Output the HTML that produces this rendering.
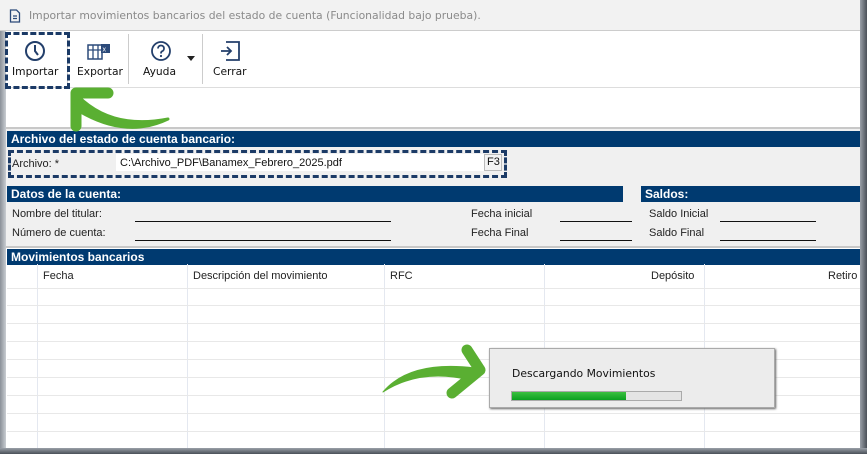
<!DOCTYPE html>
<html><head><meta charset="utf-8"><style>
*{margin:0;padding:0;box-sizing:border-box}
body{width:867px;height:454px;overflow:hidden;background:#fff;font-family:"Liberation Sans",sans-serif;font-size:12px;color:#111;position:relative}
.a{position:absolute}
.hdr{position:absolute;background:#003a70;color:#fff;font-weight:bold;font-size:12px;height:16px;line-height:16px;padding-left:4px}
.lbl{position:absolute;font-size:11px;color:#222}
.ul{position:absolute;height:1px;background:#111}
.tb{position:absolute;top:65px;color:#111;font-family:"DejaVu Sans","Liberation Sans",sans-serif;font-size:10.7px}
.vl{position:absolute;top:264px;bottom:6px;width:1px;background:#e4e8f0}
.hl{position:absolute;left:7px;right:7px;height:1px;background:#e8e8e8}
</style></head><body>
<div class="a" style="left:0;top:0;width:867px;height:31px;background:#f2f2f2;border-bottom:1px solid #ccc"></div>
<svg class="a" style="left:9px;top:9px" width="12" height="14" viewBox="0 0 12 14"><path d="M1.5 1h6l3 3v9h-9z" fill="none" stroke="#2b4a7a" stroke-width="1.3"/><path d="M4 7h4M4 9.5h4" stroke="#2b4a7a" stroke-width="1.2"/></svg>
<div class="a" style="left:29px;top:9px;color:#8a8a8a;font-family:'DejaVu Sans','Liberation Sans',sans-serif;font-size:10.8px">Importar movimientos bancarios del estado de cuenta (Funcionalidad bajo prueba).</div>
<div class="a" style="left:0;top:31px;width:6px;height:423px;background:linear-gradient(90deg,#8a9098,#c9cdd2)"></div>
<div class="a" style="left:6px;top:87px;width:855px;height:1px;background:#ddd"></div>
<div class="a" style="left:67px;top:34px;width:1px;height:50px;background:#ccc"></div>
<div class="a" style="left:128px;top:34px;width:1px;height:50px;background:#ccc"></div>
<div class="a" style="left:202px;top:34px;width:1px;height:50px;background:#ccc"></div>
<svg class="a" style="left:24px;top:40px" width="22" height="22" viewBox="0 0 22 22"><circle cx="11" cy="11" r="9" fill="none" stroke="#233f6b" stroke-width="2"/><path d="M11 5v6l3 4" fill="none" stroke="#233f6b" stroke-width="2"/></svg>
<svg class="a" style="left:87px;top:42px" width="24" height="20" viewBox="0 0 24 20"><rect x="1" y="3" width="14" height="14" fill="none" stroke="#2b4a7a" stroke-width="1.5"/><path d="M1 8h14M6 3v14M11 3v14" stroke="#2b4a7a" stroke-width="1.3"/><rect x="14" y="2" width="9" height="9" fill="#2b4a7a"/><text x="15.5" y="9.5" font-size="7" fill="#fff" font-family="Liberation Sans">x</text></svg>
<svg class="a" style="left:150px;top:40px" width="22" height="22" viewBox="0 0 22 22"><circle cx="11" cy="11" r="9" fill="none" stroke="#233f6b" stroke-width="1.8"/><path d="M8 8.5a3 3 0 1 1 4 2.8c-1 .5-1 1-1 2.2" fill="none" stroke="#233f6b" stroke-width="1.8"/><circle cx="11" cy="16" r="1.1" fill="#233f6b"/></svg>
<svg class="a" style="left:187px;top:56px" width="8" height="5"><path d="M0 0h8l-4 5z" fill="#222"/></svg>
<svg class="a" style="left:219px;top:41px" width="22" height="20" viewBox="0 0 22 20"><path d="M7 1h13v18H7" fill="none" stroke="#233f6b" stroke-width="1.8"/><path d="M2 10h10M8 6l4 4-4 4" fill="none" stroke="#233f6b" stroke-width="1.8"/></svg>
<div class="tb" style="left:12px">Importar</div>
<div class="tb" style="left:77px">Exportar</div>
<div class="tb" style="left:143px">Ayuda</div>
<div class="tb" style="left:213px">Cerrar</div>
<div class="a" style="left:5px;top:32px;width:65px;height:57px;border:3px dashed #1b3a66"></div>
<div class="a" style="left:6px;top:127px;width:855px;height:120px;background:#f0f0f0;border-top:2px solid #c8c8c8"></div>
<div class="hdr" style="left:7px;top:131px;width:860px">Archivo del estado de cuenta bancario:</div>
<div class="lbl" style="left:12px;top:158px">Archivo: *</div>
<div class="a" style="left:116px;top:154px;width:368px;height:17px;background:#fff"></div>
<div class="lbl" style="left:120px;top:157px;color:#111">C:\Archivo_PDF\Banamex_Febrero_2025.pdf</div>
<div class="a" style="left:484px;top:154px;width:18px;height:17px;border:1px solid #bbb;background:#f4f4f4;font-size:11px;line-height:15px;padding-left:2px">F3</div>
<div class="a" style="left:8px;top:150px;width:499px;height:28px;border:3px dashed #1b3a66"></div>
<div class="hdr" style="left:7px;top:186px;width:616px">Datos de la cuenta:</div>
<div class="hdr" style="left:641px;top:186px;width:226px">Saldos:</div>
<div class="lbl" style="left:12px;top:208px">Nombre del titular:</div>
<div class="lbl" style="left:12px;top:227px">Número de cuenta:</div>
<div class="ul" style="left:135px;top:221px;width:256px"></div>
<div class="ul" style="left:135px;top:240px;width:256px"></div>
<div class="lbl" style="left:471px;top:208px">Fecha inicial</div>
<div class="lbl" style="left:471px;top:227px">Fecha Final</div>
<div class="ul" style="left:560px;top:221px;width:72px"></div>
<div class="ul" style="left:560px;top:240px;width:72px"></div>
<div class="lbl" style="left:649px;top:208px">Saldo Inicial</div>
<div class="lbl" style="left:649px;top:227px">Saldo Final</div>
<div class="ul" style="left:720px;top:221px;width:96px"></div>
<div class="ul" style="left:720px;top:240px;width:96px"></div>
<div class="a" style="left:6px;top:246px;width:855px;height:2px;background:#c8c8c8"></div>
<div class="hdr" style="left:7px;top:249px;width:860px">Movimientos bancarios</div>
<div class="lbl" style="left:43px;top:270px">Fecha</div>
<div class="lbl" style="left:193px;top:270px">Descripción del movimiento</div>
<div class="lbl" style="left:390px;top:270px">RFC</div>
<div class="lbl" style="left:651px;top:270px">Depósito</div>
<div class="lbl" style="left:828px;top:270px">Retiro</div>
<div class="vl" style="left:37px"></div><div class="vl" style="left:187px"></div><div class="vl" style="left:384px"></div><div class="vl" style="left:544px"></div><div class="vl" style="left:704px"></div>
<div class="hl" style="top:288px"></div><div class="hl" style="top:305px"></div><div class="hl" style="top:323px"></div><div class="hl" style="top:341px"></div><div class="hl" style="top:359px"></div><div class="hl" style="top:377px"></div><div class="hl" style="top:395px"></div><div class="hl" style="top:413px"></div><div class="hl" style="top:431px"></div>
<div class="a" style="left:860px;top:0;width:7px;height:454px;background:linear-gradient(90deg,#9aa0a8,#4a5058)"></div>
<div class="a" style="left:0;top:448px;width:867px;height:6px;background:linear-gradient(180deg,#9aa0a8,#4a5058)"></div>
<div class="a" style="left:489px;top:348px;width:286px;height:60px;background:#ececec;border:1px solid #aaa;box-shadow:1px 1px 2px #666"></div>
<div class="a" style="left:512px;top:367px;font-family:'DejaVu Sans','Liberation Sans',sans-serif;font-size:10.8px">Descargando Movimientos</div>
<div class="a" style="left:511px;top:391px;width:171px;height:10px;border:1px solid #aaa;background:#e4e4e4"></div>
<div class="a" style="left:512px;top:392px;width:114px;height:8px;background:linear-gradient(180deg,#3cc040,#0aa020)"></div>
<svg class="a" style="left:0;top:0" width="867" height="454">
<g fill="#5aaf32" stroke="#5aaf32" stroke-linecap="round" stroke-linejoin="round">
<path d="M108 93 L76 93 L76 126" fill="none" stroke-width="11"/>
<path d="M78 96 Q112 130 168 119 Q124 140 74 108 Z" stroke-width="3"/>
<path d="M467 350 L480 370 L452 393" fill="none" stroke-width="11"/>
<path d="M383 392 Q410 360 475 368 L470 380 Q420 368 383 392 Z" stroke-width="1"/>
</g></svg>
</body></html>
